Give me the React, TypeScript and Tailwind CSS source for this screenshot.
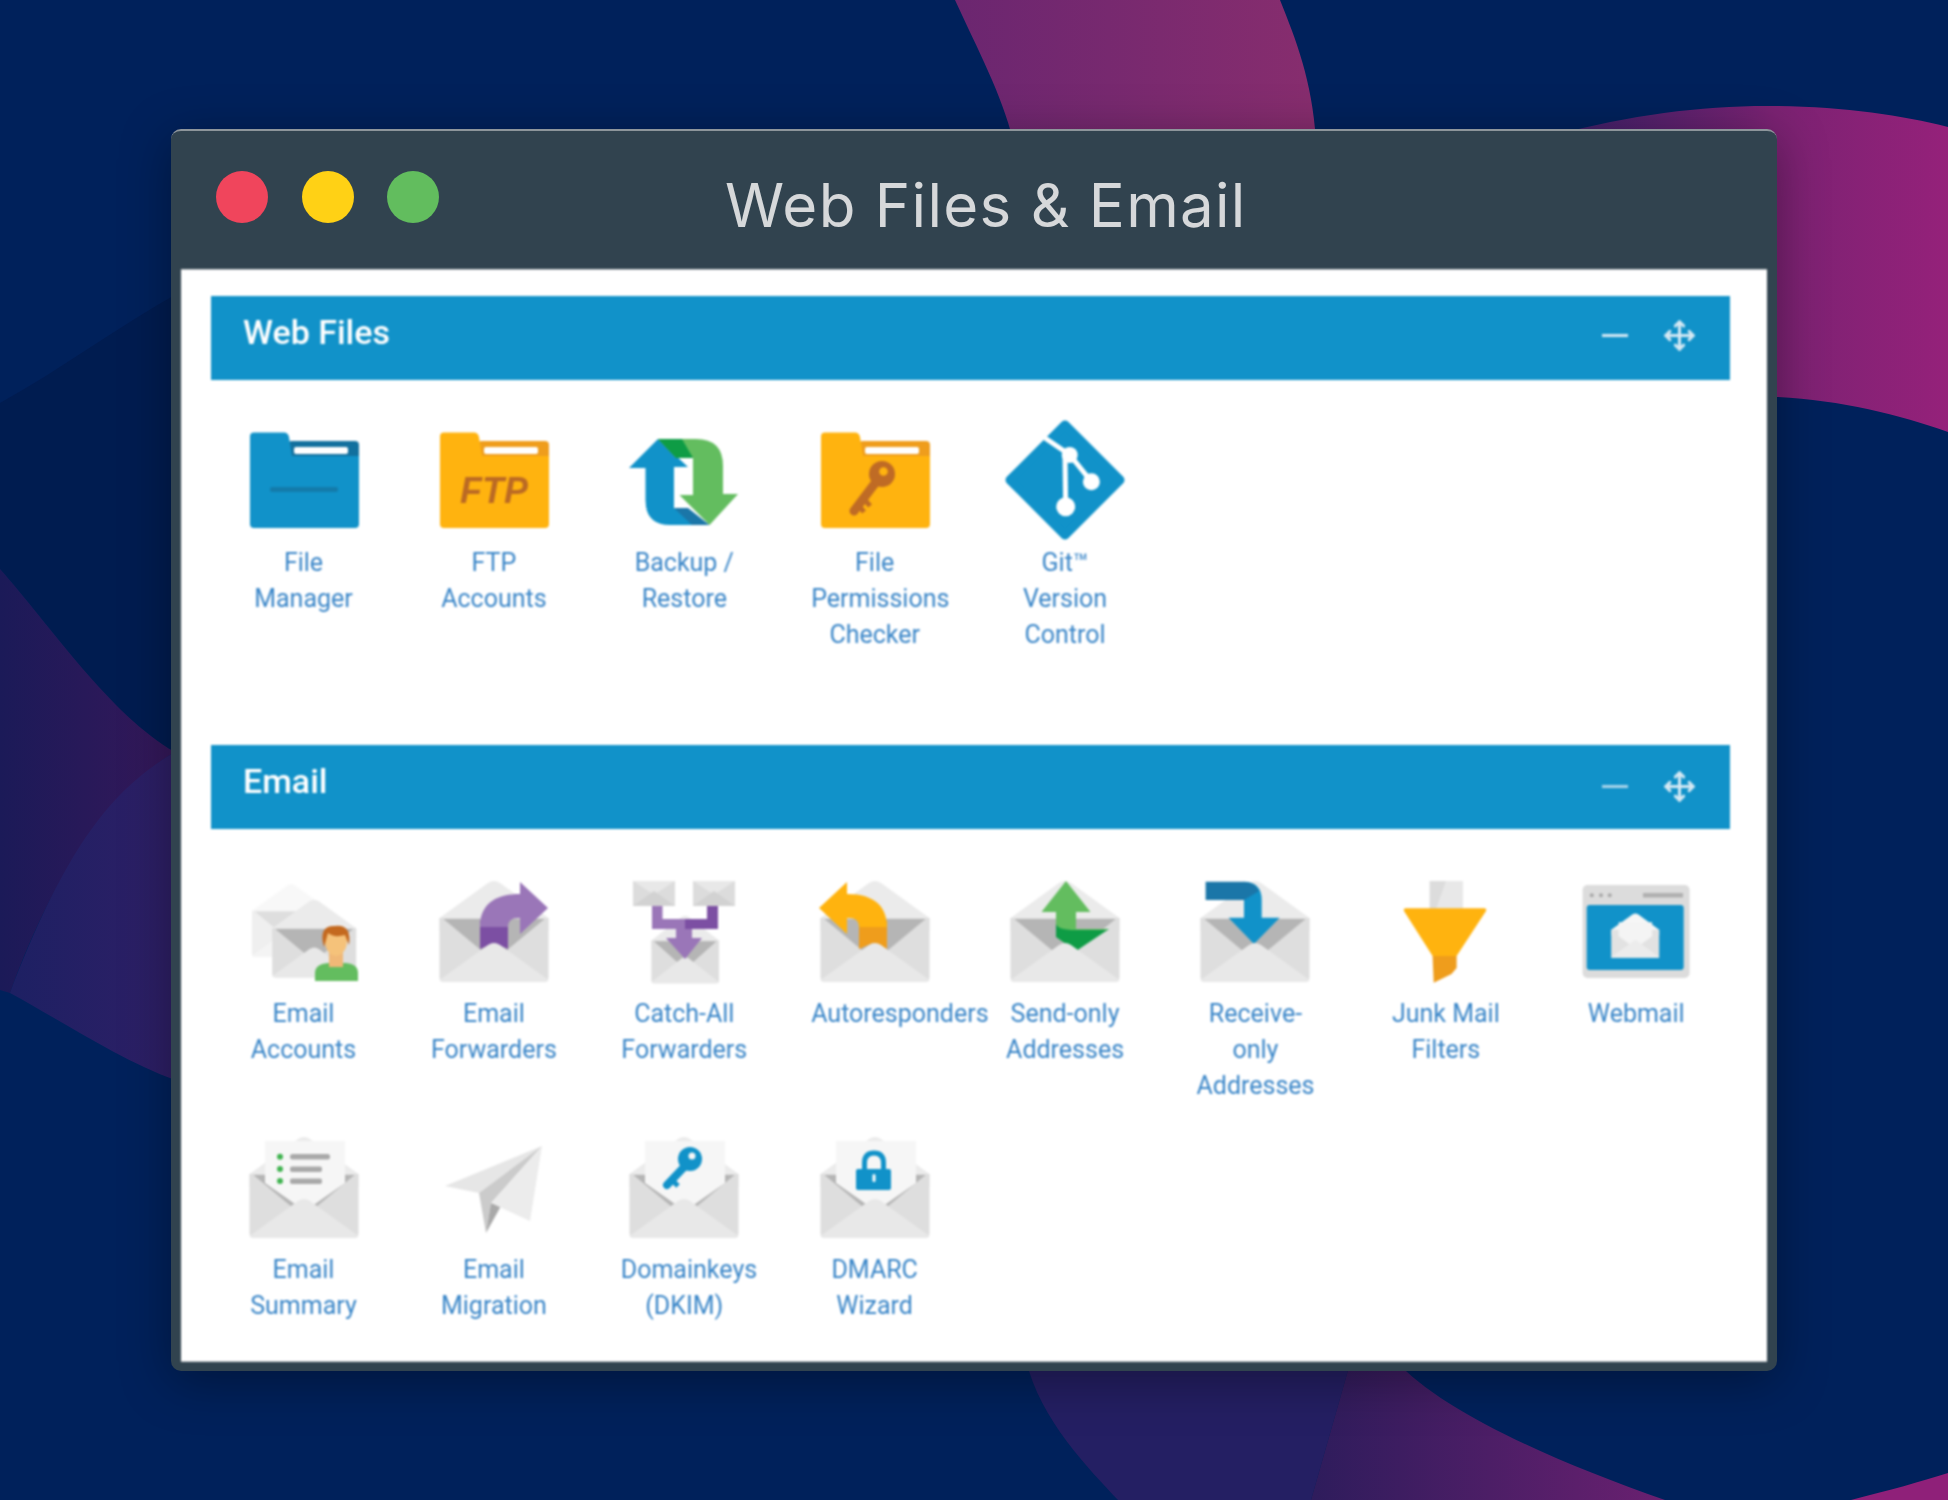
import type { ReactNode } from "react";
import { Move } from "lucide-react";

const BLUE = "#1192c9";
const BLUE_DARK = "#1b76a8";
const GREEN = "#63bd5f";
const GREEN_DARK = "#0e9c45";
const AMBER = "#ffb30f";
const AMBER_DARK = "#ef9d1c";
const PURPLE = "#9a76b8";
const PURPLE_DARK = "#7c4fa3";

function Icon({ children }: { children: ReactNode }) {
  return (
    <svg viewBox="0 0 120 120" className="h-[120px] w-[120px] shrink-0 overflow-visible">
      {children}
    </svg>
  );
}

function Folder({ main, dark, children }: { main: string; dark: string; children?: ReactNode }) {
  return (
    <>
      <rect x="44" y="21" width="71" height="30" rx="4" fill={dark} />
      <rect x="50" y="27" width="54" height="7" rx="2" fill="#ffffff" />
      <path
        d="M10 12.5 H40 Q44 12.5 45 17 L48 36 H115 V104 Q115 108 111 108 H10 Q6 108 6 104 V16.5 Q6 12.5 10 12.5Z"
        fill={main}
      />
      {children}
    </>
  );
}

// open envelope, children go between the inside and the front flap
function Envelope({ children, light }: { children?: ReactNode; light?: boolean }) {
  return (
    <>
      <path d="M54 12 Q60 8 66 12 L114.5 47 V60 H5.5 V47Z" fill={light ? "#f4f4f4" : "#ebebeb"} />
      <path d="M5.5 47 H114.5 V106 Q114.5 111 109.5 111 H10.5 Q5.5 111 5.5 106Z" fill={light ? "#e2e2e2" : "#dedede"} />
      <path d="M9.5 48 H110.5 L60 90Z" fill={light ? "#c4c4c4" : "#b5b5b5"} />
      {children}
      <path
        d="M5.5 109 L54 74 Q60 70 66 74 L114.5 109 Q113.5 111 109.5 111 H10.5 Q6.5 111 5.5 109Z"
        fill={light ? "#ececec" : "#e8e8e8"}
      />
    </>
  );
}

function SmallEnvelope({ x, y, w, h }: { x: number; y: number; w: number; h: number }) {
  return (
    <>
      <rect x={x} y={y} width={w} height={h} fill="#dcdcdc" />
      <path d={`M${x} ${y} H${x + w} L${x + w / 2} ${y + h * 0.55}Z`} fill="#e8e8e8" />
      <path d={`M${x} ${y + h} L${x + w / 2} ${y + h * 0.4} L${x + w} ${y + h}Z`} fill="#d2d2d2" />
    </>
  );
}

function KeyShape({ color, hx, hy, ex, ey, r, hole }: { color: string; hx: number; hy: number; ex: number; ey: number; r: number; hole: string }) {
  return (
    <>
      <line x1={hx} y1={hy} x2={ex} y2={ey} stroke={color} strokeWidth="9" strokeLinecap="round" />
      <line x1={ex + 5} y1={ey - 5} x2={ex + 10} y2={ey + 1} stroke={color} strokeWidth="5" />
      <line x1={ex + 11} y1={ey - 11} x2={ex + 16} y2={ey - 5} stroke={color} strokeWidth="5" />
      <circle cx={hx} cy={hy} r={r} fill={color} />
      <circle cx={hx + 1.5} cy={hy - 2.5} r={r * 0.33} fill={hole} />
    </>
  );
}

function Paper({ children }: { children?: ReactNode }) {
  return (
    <Envelope>
      <path d="M21 14 H101 V56 L61 84 L21 56Z" fill="#f6f6f6" />
      {children}
    </Envelope>
  );
}

const FwdArrow = ({ main, dark }: { main: string; dark: string }) => (
  <>
    <path d="M46 50 H74 V78 L60 72 L46 78Z" fill={dark} />
    <path d="M86 11 L114 37 L86 63 V47 Q74 46 74 56 H46 C46 36 58 23 86 23Z" fill={main} />
  </>
);

const icons: Record<string, ReactNode> = {
  fileManager: (
    <Folder main={BLUE} dark="#12709e">
      <rect x="26" y="67" width="68" height="5" rx="2" fill="#137bab" />
    </Folder>
  ),
  ftp: (
    <Folder main={AMBER} dark={AMBER_DARK}>
      <text x="60" y="83" textAnchor="middle" fontSize="36" fontWeight="700" fontStyle="italic" fontFamily="'Liberation Sans', sans-serif" fill="#bb6a24">
        FTP
      </text>
    </Folder>
  ),
  backup: (
    <>
      <path d="M34 19 L5 48 H21.5 V80 Q21.5 105 46 105 H82 L50 88 V47 H64Z" fill={BLUE} />
      <path d="M50 88 H64 L85.5 105 H68Z" fill={BLUE_DARK} />
      <path d="M34 19 H72 Q99 19 99 46 V74 H114 L85.5 105 L55.5 75 H69 V38 H52Z" fill={GREEN} />
      <path d="M34 19 H58 L69 38 H52Z" fill={GREEN_DARK} />
    </>
  ),
  permissions: (
    <Folder main={AMBER} dark={AMBER_DARK}>
      <KeyShape color="#bf6b25" hx={67} hy={54} ex={39} ey={91} r={13} hole={AMBER} />
    </Folder>
  ),
  git: (
    <>
      <path d="M60 5 L115 60 L60 115 L5 60Z" fill={BLUE} stroke={BLUE} strokeWidth="9" strokeLinejoin="round" />
      <path d="M40 18 L65 35 L86.4 61.7" fill="none" stroke="#ffffff" strokeWidth="5" />
      <path d="M60 36 L60.7 86.7" stroke="#ffffff" strokeWidth="5" />
      <circle cx="64.7" cy="35" r="8" fill="#ffffff" />
      <circle cx="86.4" cy="61.7" r="8.5" fill="#ffffff" />
      <circle cx="60.7" cy="86.7" r="9.5" fill="#ffffff" />
    </>
  ),
  accounts: (
    <>
      <g transform="translate(4 6) scale(0.72)" opacity="0.55">
        <Envelope light />
      </g>
      <g transform="translate(24 21) scale(0.77)">
        <Envelope />
      </g>
      <path d="M71 110 V102 Q71 93 84 92 H102 Q114 93 114 102 V110Z" fill={GREEN} />
      <rect x="85" y="78" width="14" height="18" fill="#f0b877" />
      <ellipse cx="92" cy="70" rx="11" ry="15" fill="#f5c27a" />
      <path d="M80 76 Q74 55 90 55 Q108 52 105 74 L101 64 Q90 67 84 62Z" fill="#c4691f" />
    </>
  ),
  forwarders: (
    <Envelope>
      <FwdArrow main={PURPLE} dark={PURPLE_DARK} />
    </Envelope>
  ),
  catchAll: (
    <>
      <SmallEnvelope x={9} y={10} w={42} h={25} />
      <SmallEnvelope x={69} y={10} w={42} h={25} />
      <g transform="translate(24 38) scale(0.62 0.67)">
        <Envelope />
      </g>
      <path d="M28 35 H38.5 V48 H61 V58 H28Z" fill={PURPLE} />
      <path d="M83 35 H94 V58 H61 V48 H83Z" fill={PURPLE_DARK} />
      <path d="M52 58 H68 V67 H78 L61 88 L42 67 H52Z" fill={PURPLE} />
    </>
  ),
  auto: (
    <Envelope>
      <g transform="translate(118 0) scale(-1 1)">
        <FwdArrow main={AMBER} dark={AMBER_DARK} />
      </g>
    </Envelope>
  ),
  sendOnly: (
    <Envelope>
      <path d="M51 52 L71 58 H104 L71 80 L51 66Z" fill={GREEN_DARK} />
      <path d="M61 10 L85.5 41 H71 V58 H100 L104 59 H71 Q51 59 51 52 V41 H36.5Z" fill={GREEN} />
    </Envelope>
  ),
  receiveOnly: (
    <Envelope>
      <path d="M49 10.7 Q66.7 11 66.7 29 V46.7 H84.6 L59 73 L33.6 46.7 H49 V29Z" fill={BLUE} />
      <path d="M10.6 10.7 H49 Q60 11 64 20 L49 29 H10.6Z" fill={BLUE_DARK} />
    </Envelope>
  ),
  junk: (
    <>
      <rect x="43.6" y="10" width="33.4" height="28" fill="#dcdcdc" />
      <path d="M60 10 H77 V38 H50Z" fill="#e8e8e8" />
      <path d="M20 37.3 H98 Q101 37.3 100 40 L70.6 85 H46.6 L18 40 Q17 37.3 20 37.3Z" fill={AMBER} />
      <path d="M46.6 85 H70.6 V97 L65.5 103 L47.7 111.7Z" fill={AMBER_DARK} />
    </>
  ),
  webmail: (
    <>
      <rect x="6.6" y="14" width="107" height="93" rx="5" fill="#dcdcdc" />
      <rect x="10.7" y="34" width="97" height="65" rx="3" fill={BLUE} />
      <circle cx="15.8" cy="24.3" r="2" fill="#a8a8a8" />
      <circle cx="25" cy="24.3" r="2" fill="#a8a8a8" />
      <circle cx="33.7" cy="24.3" r="2" fill="#a8a8a8" />
      <rect x="67" y="22" width="40" height="4.5" fill="#b0b0b0" />
      <g transform="translate(33 38) scale(0.44)">
        <path d="M54 12 Q60 8 66 12 L114 47 V60 H5 V47Z" fill="#f6f6f6" />
        <path d="M5 47 H114 V111 H5Z" fill="#e2e2e2" />
        <path d="M22 30 H98 V62 L60 90 L22 62Z" fill="#f4f4f4" />
        <path d="M5 109 L60 70 L114 109 V111 H5Z" fill="#ececec" />
      </g>
    </>
  ),
  summary: (
    <Paper>
      <circle cx="36" cy="29.7" r="3" fill="#3fb34f" />
      <circle cx="36" cy="42" r="3" fill="#3fb34f" />
      <circle cx="36" cy="54" r="3" fill="#3fb34f" />
      <rect x="46" y="27" width="40" height="5.5" rx="2.5" fill="#a9a9a9" />
      <rect x="46" y="39.5" width="32" height="5.5" rx="2" fill="#a9a9a9" />
      <rect x="46" y="51.5" width="32" height="5.5" rx="2" fill="#a9a9a9" />
    </Paper>
  ),
  migration: (
    <>
      <path d="M108 19 L11 59 L45 66Z" fill="#e6e6e6" />
      <path d="M108 19 L45 66 L52 106 L57 76Z" fill="#cbcbcb" />
      <path d="M52 106 L57 76 L67 79Z" fill="#a9a9a9" />
      <path d="M108 19 L57 76 L96 94Z" fill="#ececec" />
    </>
  ),
  dkim: (
    <Paper>
      <line x1="62" y1="38" x2="43" y2="58" stroke={BLUE} strokeWidth="8" strokeLinecap="round" />
      <line x1="48" y1="53" x2="54" y2="59" stroke={BLUE} strokeWidth="5" />
      <circle cx="66" cy="32" r="12" fill={BLUE} />
      <circle cx="68" cy="29" r="3.5" fill="#f6f6f6" />
    </Paper>
  ),
  dmarc: (
    <Paper>
      <path d="M49.5 44 V36 Q49.5 26 59 26 Q68.5 26 68.5 36 V44" fill="none" stroke={BLUE} strokeWidth="5" />
      <rect x="41" y="42" width="35" height="21" rx="2" fill={BLUE} />
      <rect x="57.5" y="47" width="3" height="8" rx="1.5" fill="#ffffff" />
    </Paper>
  ),
};

const webFiles = [
  { label: "File Manager", icon: icons.fileManager },
  { label: "FTP Accounts", icon: icons.ftp },
  { label: "Backup / Restore", icon: icons.backup },
  { label: "File Permissions Checker", icon: icons.permissions },
  { label: "Git™ Version Control", icon: icons.git },
];

const email = [
  { label: "Email Accounts", icon: icons.accounts },
  { label: "Email Forwarders", icon: icons.forwarders },
  { label: "Catch-All Forwarders", icon: icons.catchAll },
  { label: "Autoresponders", icon: icons.auto },
  { label: "Send-only Addresses", icon: icons.sendOnly },
  { label: "Receive-only Addresses", icon: icons.receiveOnly },
  { label: "Junk Mail Filters", icon: icons.junk },
  { label: "Webmail", icon: icons.webmail },
  { label: "Email Summary", icon: icons.summary },
  { label: "Email Migration", icon: icons.migration },
  { label: "Domainkeys (DKIM)", icon: icons.dkim },
  { label: "DMARC Wizard", icon: icons.dmarc },
];

function Background() {
  return (
    <svg viewBox="0 0 1948 1500" className="absolute inset-0 h-[1500px] w-[1948px]">
      <defs>
        <linearGradient id="band" x1="955" x2="1314" y1="0" y2="0" gradientUnits="userSpaceOnUse">
          <stop offset="0" stopColor="#6b2670" />
          <stop offset="1" stopColor="#872d6e" />
        </linearGradient>
        <linearGradient id="right" x1="1560" x2="1948" y1="0" y2="0" gradientUnits="userSpaceOnUse">
          <stop offset="0" stopColor="#3a2068" />
          <stop offset="0.55" stopColor="#7a2272" />
          <stop offset="1" stopColor="#95217a" />
        </linearGradient>
        <linearGradient id="plum" x1="0" x2="171" y1="0" y2="0" gradientUnits="userSpaceOnUse">
          <stop offset="0" stopColor="#1b1a58" />
          <stop offset="1" stopColor="#35185a" />
        </linearGradient>
        <linearGradient id="lilac" x1="10" x2="171" y1="0" y2="0" gradientUnits="userSpaceOnUse">
          <stop offset="0" stopColor="#1d2063" />
          <stop offset="1" stopColor="#2e1f66" />
        </linearGradient>
        <linearGradient id="bottom" x1="1311" x2="1665" y1="0" y2="0" gradientUnits="userSpaceOnUse">
          <stop offset="0" stopColor="#2e1c5c" />
          <stop offset="1" stopColor="#6a2070" />
        </linearGradient>
      </defs>
      <rect width="1948" height="1500" fill="#00215b" />
      <path d="M955 0 C978 50 1002 95 1013 140 H1316 C1312 80 1296 40 1280 0Z" fill="url(#band)" />
      <path d="M1555 135 C1630 115 1700 106 1767 106 C1840 106 1900 115 1948 127 V432 C1900 415 1840 400 1777 397 H1700Z" fill="url(#right)" />
      <path d="M0 403 C60 370 120 325 180 292 V760 C110 715 50 625 0 569Z" fill="#001c50" />
      <path d="M0 569 C50 625 110 715 175 752 C110 790 50 880 10 993 L0 990Z" fill="url(#plum)" />
      <path d="M175 752 C110 790 65 850 10 993 C60 1020 120 1060 175 1080Z" fill="url(#lilac)" />
      <path d="M1026 1360 C1040 1420 1090 1470 1118 1500 H1311 L1351 1360Z" fill="#241f63" />
      <path d="M1351 1360 L1311 1500 H1665 C1550 1460 1440 1410 1395 1360Z" fill="url(#bottom)" />
      <path d="M1851 1500 C1890 1490 1920 1482 1948 1473 V1500Z" fill="#8f2079" />
    </svg>
  );
}

function SectionBar({ title, dim }: { title: string; dim?: boolean }) {
  return (
    <div className="flex h-[84px] items-start justify-between bg-[#1192c9] pl-[32px] pr-[34px]">
      <span className="pt-[15px] font-['Roboto',sans-serif] text-[34px] font-medium leading-[42px] text-white">
        {title}
      </span>
      <div className={dim ? "flex h-full items-center gap-[35px] pb-[2px] text-[#d5e9f4]" : "flex h-full items-center gap-[35px] pb-[5px] text-[#d5e9f4]"}>
        <div className={dim ? "h-[3px] w-[26px] bg-[#a9d4ea]" : "h-[3px] w-[26px] bg-[#d5e9f4]"} />
        <Move size={33} strokeWidth={2.2} />
      </div>
    </div>
  );
}

function Tool({ label, icon }: { label: string; icon: ReactNode }) {
  return (
    <div className="flex w-[127px] flex-col items-center">
      <Icon>{icon}</Icon>
      <span className="mt-[4.5px] w-full text-center font-['Roboto',sans-serif] text-[25px] leading-[36px] text-[#3a86c8]">
        {label}
      </span>
    </div>
  );
}

export default function App() {
  return (
    <div className="relative h-[1500px] w-[1948px] overflow-hidden bg-[#00215b]">
      <Background />
      <div className="relative pl-[171px] pt-[129px]">
        <div className="w-[1606px] overflow-hidden rounded-[10px] border-t-2 border-t-[#8d959b] bg-[#31434f] px-[10px] pb-[9px] shadow-[0_10px_50px_rgba(0,0,0,0.35)]">
          <div className="flex h-[138px] items-start">
            <div className="flex gap-[33.5px] pl-[35px] pt-[40px]">
              <div className="h-[52px] w-[52px] rounded-full bg-[#f0455c]" />
              <div className="h-[52px] w-[52px] rounded-full bg-[#ffd115]" />
              <div className="h-[52px] w-[52px] rounded-full bg-[#62bd5e]" />
            </div>
            <h1 className="ml-[286px] pt-[36px] font-['Inter',sans-serif] text-[60px] font-normal leading-[76px] tracking-[1.3px] text-[#d6d8da] blur-[0.5px]">
              Web Files &amp; Email
            </h1>
          </div>
          <div className="border-y border-[#c4c8cb] bg-white pb-[37px] pl-[30px] pr-[37px] pt-[26px] blur-[0.8px]">
            <SectionBar title="Web Files" />
            <div className="ml-[29px] mt-[40px] grid grid-cols-[repeat(8,127px)] gap-x-[63.4px] gap-y-[23.5px]">
              {webFiles.map((t) => (
                <Tool key={t.label} label={t.label} icon={t.icon} />
              ))}
            </div>
            <div className="mt-[92.5px]">
              <SectionBar title="Email" dim />
            </div>
            <div className="ml-[29px] mt-[42px] grid grid-cols-[repeat(8,127px)] gap-x-[63.4px] gap-y-[23.5px]">
              {email.map((t) => (
                <Tool key={t.label} label={t.label} icon={t.icon} />
              ))}
            </div>
          </div>
        </div>
      </div>
    </div>
  );
}
